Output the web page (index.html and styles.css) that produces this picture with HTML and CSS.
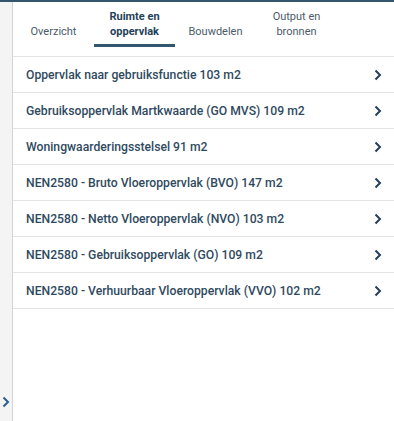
FILE: index.html
```html
<!DOCTYPE html>
<html lang="nl">
<head>
  <meta charset="UTF-8">
  <title>Ruimte en oppervlak</title>
  <link rel="stylesheet" href="styles.css">
</head>
<body>
  <div class="topbar"></div>
  <div class="layout">
    <div class="sidebar">
      <span class="sidebar-toggle">
        <svg width="8" height="12" viewBox="0 0 8 12"><path d="M1.5 1.5 L6 6 L1.5 10.5" fill="none" stroke="#2a5f8f" stroke-width="2"/></svg>
      </span>
    </div>
    <div class="main">
      <div class="tabs">
        <a class="tab" href="#">Overzicht</a>
        <a class="tab active" href="#">Ruimte en<br>oppervlak</a>
        <a class="tab" href="#">Bouwdelen</a>
        <a class="tab" href="#">Output en<br>bronnen</a>
      </div>
      <ul class="list">
        <li class="item"><span>Oppervlak naar gebruiksfunctie 103 m2</span><svg class="chev" width="8" height="12" viewBox="0 0 8 12"><path d="M1.5 1.5 L6 6 L1.5 10.5" fill="none" stroke="#243f5a" stroke-width="2"/></svg></li>
        <li class="item"><span>Gebruiksoppervlak Martkwaarde (GO MVS) 109 m2</span><svg class="chev" width="8" height="12" viewBox="0 0 8 12"><path d="M1.5 1.5 L6 6 L1.5 10.5" fill="none" stroke="#243f5a" stroke-width="2"/></svg></li>
        <li class="item"><span>Woningwaarderingsstelsel 91 m2</span><svg class="chev" width="8" height="12" viewBox="0 0 8 12"><path d="M1.5 1.5 L6 6 L1.5 10.5" fill="none" stroke="#243f5a" stroke-width="2"/></svg></li>
        <li class="item"><span>NEN2580 - Bruto Vloeroppervlak (BVO) 147 m2</span><svg class="chev" width="8" height="12" viewBox="0 0 8 12"><path d="M1.5 1.5 L6 6 L1.5 10.5" fill="none" stroke="#243f5a" stroke-width="2"/></svg></li>
        <li class="item"><span>NEN2580 - Netto Vloeroppervlak (NVO) 103 m2</span><svg class="chev" width="8" height="12" viewBox="0 0 8 12"><path d="M1.5 1.5 L6 6 L1.5 10.5" fill="none" stroke="#243f5a" stroke-width="2"/></svg></li>
        <li class="item"><span>NEN2580 - Gebruiksoppervlak (GO) 109 m2</span><svg class="chev" width="8" height="12" viewBox="0 0 8 12"><path d="M1.5 1.5 L6 6 L1.5 10.5" fill="none" stroke="#243f5a" stroke-width="2"/></svg></li>
        <li class="item"><span>NEN2580 - Verhuurbaar Vloeroppervlak (VVO) 102 m2</span><svg class="chev" width="8" height="12" viewBox="0 0 8 12"><path d="M1.5 1.5 L6 6 L1.5 10.5" fill="none" stroke="#243f5a" stroke-width="2"/></svg></li>
      </ul>
    </div>
  </div>
</body>
</html>
```
FILE: styles.css
```css
body {
  margin: 0;
  padding: 0;
  font-family: Roboto, "Noto Sans", Arial, sans-serif;
  color: #2f4a60;
  background-color: #ffffff;
  height: 421px;
  display: flex;
  flex-direction: column;
  overflow: hidden;
}

.topbar {
  height: 2px;
  background-color: #34556e;
}

.layout {
  flex: 1;
  display: flex;
}

.sidebar {
  width: 13px;
  background-color: #f4f4f4;
  border-right: 1px solid #d4d4d4;
  display: flex;
  flex-direction: column;
  justify-content: flex-end;
  padding-bottom: 13px;
  box-sizing: border-box;
}

.sidebar-toggle {
  display: flex;
  padding-left: 2px;
}

.main {
  flex: 1;
}

.tabs {
  display: flex;
  height: 55px;
  border-bottom: 1px solid #e4e4e4;
  box-sizing: border-box;
}

.tab {
  width: 81px;
  height: 45px;
  display: flex;
  align-items: flex-end;
  justify-content: center;
  text-align: center;
  text-decoration: none;
  color: #4b5c69;
  font-size: 11px;
  line-height: 15px;
  padding-bottom: 5px;
  box-sizing: border-box;
  border-bottom: 3px solid transparent;
}

.tab.active {
  color: #243f5a;
  font-weight: 700;
  border-bottom-color: #34556e;
}

.list {
  list-style: none;
  margin: 0;
  padding: 0;
}

.item {
  height: 36px;
  display: flex;
  align-items: center;
  justify-content: space-between;
  padding: 0 12px 0 13px;
  border-bottom: 1px solid #e4e4e4;
  box-sizing: border-box;
  font-size: 12.2px;
  font-weight: 500;
}

.chev {
  flex-shrink: 0;
}
```
